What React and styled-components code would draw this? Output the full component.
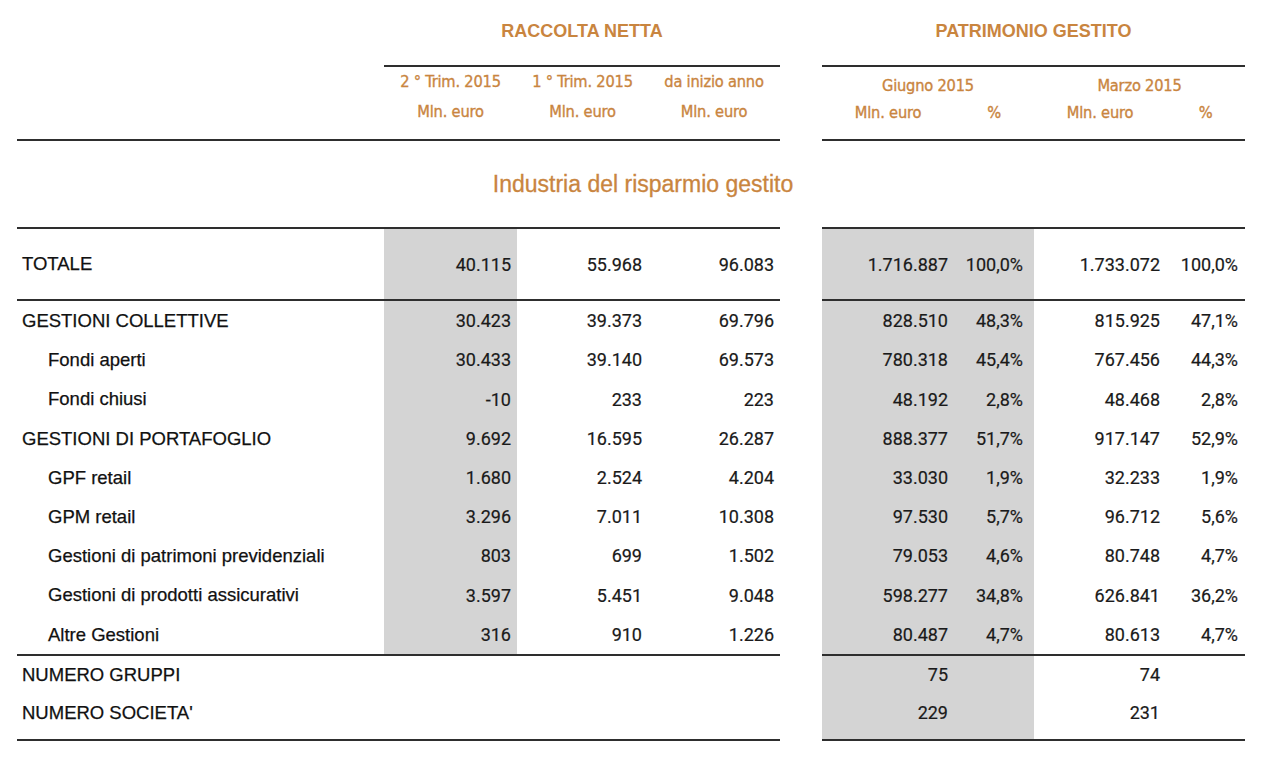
import React from 'react';
import styled, { createGlobalStyle, css } from 'styled-components';

const ORANGE = '#c9853f';
const RULE = '#2e2e2e';
const SHADE = '#d4d4d4';

const GlobalStyle = createGlobalStyle`
  html, body { margin: 0; padding: 0; background: #fff; }
  body { font-family: "Liberation Sans", Arial, sans-serif; color: #1a1a1a; }
`;

const gridCols = css`
  display: grid;
  grid-template-columns: 367px 133px 131px 132px 42px 132px 80px 132px 79px;
`;

const Page = styled.div`
  padding-left: 17px;
  width: 1228px;
`;

const GroupTitleRow = styled.div`
  ${gridCols};
  height: 65px;
  padding-top: 20px;
  box-sizing: border-box;
`;

const GroupTitle = styled.div`
  grid-column: ${(p) => p.$col};
  text-align: center;
  font: bold 18px/22px "Liberation Sans", Arial, sans-serif;
  color: ${ORANGE};
`;

const Rule = styled.div`
  ${gridCols};
  height: 2px;
`;

const RuleSeg = styled.div`
  grid-column: ${(p) => p.$col};
  background: ${RULE};
`;

const condensed = css`
  font-family: "DejaVu Sans Condensed", "DejaVu Sans", sans-serif;
  font-stretch: condensed;
  font-size: 16.3px;
  color: ${ORANGE};
  letter-spacing: -0.2px;
  -webkit-text-stroke: 0.35px ${ORANGE};
`;

const SubHeadRow = styled.div`
  ${gridCols};
  height: 72px;
`;

const SubHeadCell = styled.div`
  ${condensed};
  grid-column: ${(p) => p.$col};
  display: flex;
  flex-direction: column;
  align-items: center;
  line-height: 30px;
  white-space: nowrap;
`;

const SubHeadGroup = styled.div`
  ${condensed};
  grid-column: ${(p) => p.$col} / span 2;
  display: grid;
  grid-template-columns: ${(p) => p.$cols};
  grid-auto-rows: 27px;
  align-content: start;
  padding-top: 5px;
  line-height: 27px;
  text-align: center;
  white-space: nowrap;
`;

const GroupLabel = styled.div`
  grid-column: 1 / -1;
`;

const SectionTitleRow = styled.div`
  height: 86px;
  display: flex;
  align-items: center;
  justify-content: center;
  padding-left: 24px;
  font: 23px/1 "Liberation Sans", Arial, sans-serif;
  color: ${ORANGE};
  -webkit-text-stroke: 0.3px ${ORANGE};
`;

const DataRow = styled.div`
  ${gridCols};
  height: ${(p) => p.$h}px;
`;

const LabelCell = styled.div`
  display: flex;
  align-items: center;
  padding-left: ${(p) => (p.$indent ? 31 : 5)}px;
  padding-top: 1px;
  font: 18.5px/1 "Liberation Sans", Arial, sans-serif;
  color: #111;
  -webkit-text-stroke: 0.25px #111;
  white-space: nowrap;
`;

const NumCell = styled.div`
  display: flex;
  align-items: center;
  justify-content: flex-end;
  padding-right: ${(p) => p.$pr}px;
  padding-top: 1px;
  background: ${(p) => (p.$shade ? SHADE : 'transparent')};
  font: 18px/1 Roboto, "Liberation Sans", sans-serif;
  color: #1a1a1a;
  -webkit-text-stroke: 0.2px #1a1a1a;
  white-space: nowrap;
`;

const COLS = [
  { pr: 6, side: 'left' },
  { pr: 6 },
  { pr: 6 },
  { gap: true },
  { pr: 6, side: 'right' },
  { pr: 11, side: 'right' },
  { pr: 6 },
  { pr: 7 },
];

function Row({ label, indent, values, h, shadeLeft, shadeRight }) {
  return (
    <DataRow $h={h}>
      <LabelCell $indent={indent}>{label}</LabelCell>
      {COLS.map((c, i) => {
        if (c.gap) return <div key={i} />;
        const shade = (c.side === 'left' && shadeLeft) || (c.side === 'right' && shadeRight);
        return (
          <NumCell key={i} $pr={c.pr} $shade={shade}>
            {values[i] || ''}
          </NumCell>
        );
      })}
    </DataRow>
  );
}

const FullRule = () => (
  <Rule>
    <RuleSeg $col="1 / span 4" />
    <RuleSeg $col="6 / span 4" />
  </Rule>
);

const rows = [
  ['GESTIONI COLLETTIVE', false, ['30.423', '39.373', '69.796', null, '828.510', '48,3%', '815.925', '47,1%']],
  ['Fondi aperti', true, ['30.433', '39.140', '69.573', null, '780.318', '45,4%', '767.456', '44,3%']],
  ['Fondi chiusi', true, ['-10', '233', '223', null, '48.192', '2,8%', '48.468', '2,8%']],
  ['GESTIONI DI PORTAFOGLIO', false, ['9.692', '16.595', '26.287', null, '888.377', '51,7%', '917.147', '52,9%']],
  ['GPF retail', true, ['1.680', '2.524', '4.204', null, '33.030', '1,9%', '32.233', '1,9%']],
  ['GPM retail', true, ['3.296', '7.011', '10.308', null, '97.530', '5,7%', '96.712', '5,6%']],
  ['Gestioni di patrimoni previdenziali', true, ['803', '699', '1.502', null, '79.053', '4,6%', '80.748', '4,7%']],
  ['Gestioni di prodotti assicurativi', true, ['3.597', '5.451', '9.048', null, '598.277', '34,8%', '626.841', '36,2%']],
  ['Altre Gestioni', true, ['316', '910', '1.226', null, '80.487', '4,7%', '80.613', '4,7%']],
];

export default function App() {
  return (
    <>
      <GlobalStyle />
      <Page>
        <GroupTitleRow>
          <GroupTitle $col="2 / span 3">RACCOLTA NETTA</GroupTitle>
          <GroupTitle $col="6 / span 4">PATRIMONIO GESTITO</GroupTitle>
        </GroupTitleRow>
        <Rule>
          <RuleSeg $col="2 / span 3" />
          <RuleSeg $col="6 / span 4" />
        </Rule>
        <SubHeadRow>
          <SubHeadCell $col="2">
            <span>2 ° Trim. 2015</span>
            <span>Mln. euro</span>
          </SubHeadCell>
          <SubHeadCell $col="3">
            <span>1 ° Trim. 2015</span>
            <span>Mln. euro</span>
          </SubHeadCell>
          <SubHeadCell $col="4">
            <span>da inizio anno</span>
            <span>Mln. euro</span>
          </SubHeadCell>
          <SubHeadGroup $col="6" $cols="132px 80px">
            <GroupLabel>Giugno 2015</GroupLabel>
            <span>Mln. euro</span>
            <span>%</span>
          </SubHeadGroup>
          <SubHeadGroup $col="8" $cols="132px 79px">
            <GroupLabel>Marzo 2015</GroupLabel>
            <span>Mln. euro</span>
            <span>%</span>
          </SubHeadGroup>
        </SubHeadRow>
        <FullRule />
        <SectionTitleRow>Industria del risparmio gestito</SectionTitleRow>
        <FullRule />
        <Row
          label="TOTALE"
          h={70}
          shadeLeft
          shadeRight
          values={['40.115', '55.968', '96.083', null, '1.716.887', '100,0%', '1.733.072', '100,0%']}
        />
        <FullRule />
        {rows.map(([label, indent, values]) => (
          <Row key={label} label={label} indent={indent} values={values} h={39.22} shadeLeft shadeRight />
        ))}
        <FullRule />
        <Row label="NUMERO GRUPPI" h={38} shadeRight values={[null, null, null, null, '75', '', '74', '']} />
        <Row label="NUMERO SOCIETA'" h={38} shadeRight values={[null, null, null, null, '229', '', '231', '']} />
        <Row label="" h={7} shadeRight values={[]} />
        <FullRule />
      </Page>
    </>
  );
}
